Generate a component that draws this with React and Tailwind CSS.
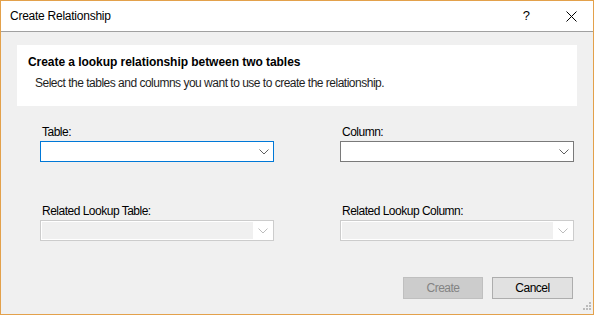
import React from "react";

function Chevron({ color }) {
  return (
    <svg width="10" height="6" viewBox="0 0 10 6" className="block">
      <path d="M0.5 0.5 L5 5 L9.5 0.5" fill="none" stroke={color} strokeWidth="1" />
    </svg>
  );
}

function Combo({ focused }) {
  return (
    <div
      className={
        "h-[21px] w-[234px] bg-white flex items-center justify-end pr-[4px] border " +
        (focused ? "border-[#0078d7]" : "border-[#7a7a7a]")
      }
    >
      <Chevron color="#606060" />
    </div>
  );
}

function DisabledCombo() {
  return (
    <div className="h-[21px] w-[234px] bg-white border border-[#cccccc] p-[1px] flex">
      <div className="flex-1 bg-[#f0f0f0]" />
      <div className="w-[19px] flex items-center justify-center pl-[1px]">
        <Chevron color="#bcbcbc" />
      </div>
    </div>
  );
}

export default function App() {
  const font = { fontFamily: '"Liberation Sans", Arial, sans-serif' };
  return (
    <div
      className="relative w-[594px] h-[315px] border border-[#e3a14b] bg-[#f0f0f0] flex flex-col text-[12px] text-black overflow-hidden tracking-[-0.5px]"
      style={font}
    >
      <div className="h-[30px] bg-white border-b border-[#a0a0a0] box-content flex items-center">
        <div className="pl-[9px] flex-1 leading-[14px] tracking-[-0.25px]">Create Relationship</div>
        <div className="w-[20px] text-center text-[13px] leading-[14px] mr-[25px]">?</div>
        <div className="w-[20px] flex justify-center mr-[12px]">
          <svg width="11" height="11" viewBox="0 0 11 11">
            <path d="M0.5 0.5 L10.5 10.5 M10.5 0.5 L0.5 10.5" stroke="#000" strokeWidth="1" />
          </svg>
        </div>
      </div>

      <div className="mt-[13px] ml-[16px] w-[560px] h-[61px] bg-white">
        <div className="pt-[9px] pl-[11px] font-bold leading-[16px] text-[#000] tracking-[-0.05px]">
          Create a lookup relationship between two tables
        </div>
        <div className="mt-[5px] pl-[18px] leading-[16px] text-[#1e1e1e]">
          Select the tables and columns you want to use to create the relationship.
        </div>
      </div>

      <div className="mt-[19px] ml-[39px] flex gap-[66px]">
        <div className="w-[234px]">
          <div className="pl-[2px] h-[14px] leading-[14px] mb-[2px]">Table:</div>
          <Combo focused />
        </div>
        <div className="w-[234px]">
          <div className="pl-[2px] h-[14px] leading-[14px] mb-[2px]">Column:</div>
          <Combo />
        </div>
      </div>

      <div className="mt-[42px] ml-[39px] flex gap-[66px]">
        <div className="w-[234px]">
          <div className="pl-[2px] h-[14px] leading-[14px] mb-[2px]">Related Lookup Table:</div>
          <DisabledCombo />
        </div>
        <div className="w-[234px]">
          <div className="pl-[2px] h-[14px] leading-[14px] mb-[2px]">Related Lookup Column:</div>
          <DisabledCombo />
        </div>
      </div>

      <div className="mt-[36px] mr-[20px] flex justify-end gap-[9px]">
        <div className="w-[80px] h-[22px] bg-[#cccccc] border border-[#bfbfbf] text-[#838383] flex items-center justify-center">
          Create
        </div>
        <div className="w-[81px] h-[22px] bg-[#e1e1e1] border border-[#adadad] flex items-center justify-center">
          Cancel
        </div>
      </div>

      <svg className="absolute right-[2px] bottom-[2px]" width="10" height="10" viewBox="0 0 10 10">
        <rect x="8" y="0" width="2" height="2" fill="#bcbcbc" />
        <rect x="5" y="3" width="2" height="2" fill="#bcbcbc" />
        <rect x="8" y="3" width="2" height="2" fill="#bcbcbc" />
        <rect x="2" y="6" width="2" height="2" fill="#bcbcbc" />
        <rect x="5" y="6" width="2" height="2" fill="#bcbcbc" />
        <rect x="8" y="6" width="2" height="2" fill="#bcbcbc" />
      </svg>
    </div>
  );
}
